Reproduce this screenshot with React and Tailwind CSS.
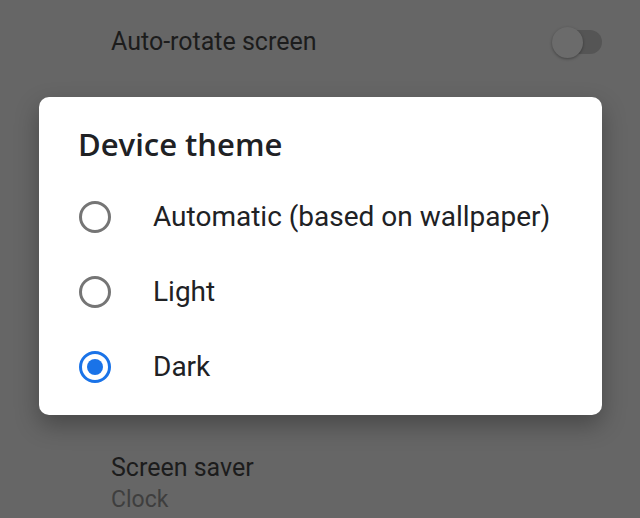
import { useState } from "react";

function SettingRow({ title, summary, children }) {
  return (
    <div className="flex items-center justify-between pl-[111px] pr-[38px]">
      <div className="flex flex-col">
        <span className="text-[25px] leading-[32px] text-[#1c1c1c]">{title}</span>
        {summary && <span className="text-[23px] leading-[32px] text-[#3e3e3e]">{summary}</span>}
      </div>
      {children}
    </div>
  );
}

function Radio({ checked }) {
  if (checked) {
    return (
      <span className="flex h-[32px] w-[32px] items-center justify-center rounded-full border-[3px] border-[#1a73e8]">
        <span className="h-[16px] w-[16px] rounded-full bg-[#1a73e8]" />
      </span>
    );
  }
  return <span className="h-[32px] w-[32px] rounded-full border-[3px] border-[#757575]" />;
}

export default function App() {
  const [theme, setTheme] = useState("dark");
  const options = [
    { id: "auto", label: "Automatic (based on wallpaper)" },
    { id: "light", label: "Light" },
    { id: "dark", label: "Dark" },
  ];

  return (
    <div
      className="relative h-[518px] w-[640px] overflow-hidden bg-[#666666]"
      style={{ fontFamily: "Roboto, 'Noto Sans', sans-serif" }}
    >
      <div className="flex h-full flex-col justify-between pt-[26px] pb-[2px]">
        <SettingRow title="Auto-rotate screen">
          <div className="relative flex h-[32px] w-[50px] items-center">
            <span className="absolute right-0 h-[24px] w-[36px] rounded-full bg-[#555555]" />
            <span className="absolute left-0 h-[31px] w-[31px] rounded-full bg-[#6b6b6b] shadow-[0_1px_3px_rgba(0,0,0,0.35)]" />
          </div>
        </SettingRow>
        <SettingRow title="Screen saver" summary="Clock" />
      </div>

      <div className="absolute left-[39px] top-[97px] flex h-[318px] w-[563px] flex-col rounded-[10px] bg-white pt-[28px] shadow-[0_10px_24px_rgba(0,0,0,0.3)]">
        <h2
          className="pl-[39px] text-[31px] leading-[38px] font-semibold text-[#202124]"
          style={{ fontFamily: "'Open Sans', Roboto, sans-serif" }}
        >
          Device theme
        </h2>
        <div className="mt-[16px] flex flex-col">
          {options.map((o) => (
            <button
              key={o.id}
              onClick={() => setTheme(o.id)}
              className="flex h-[75px] items-center gap-[42px] pl-[40px] text-left"
            >
              <Radio checked={theme === o.id} />
              <span className="text-[28px] text-[#202124]">{o.label}</span>
            </button>
          ))}
        </div>
      </div>
    </div>
  );
}
